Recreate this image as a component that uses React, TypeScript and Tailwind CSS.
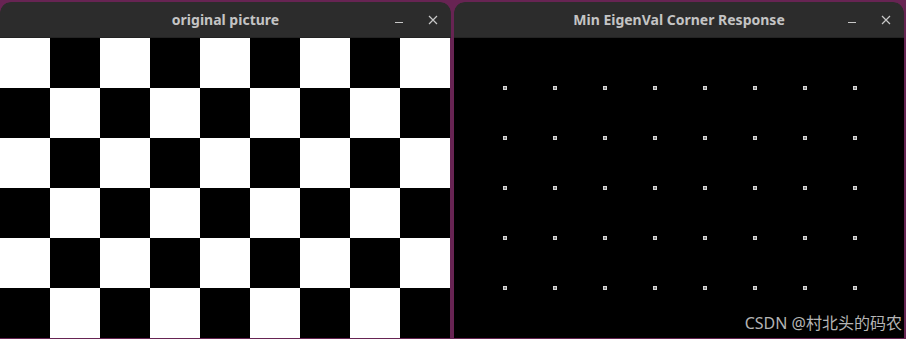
import React from "react";

const rows = [0, 1, 2, 3, 4, 5];
const cols = [0, 1, 2, 3, 4, 5, 6, 7, 8];

function TitleBar({ title }: { title: string }) {
  return (
    <div className="relative flex h-[36px] items-center justify-center rounded-t-[11px] bg-[#2c2c2c] border-b border-[#232323]">
      <span
        className="text-[14px] font-bold text-[#c4c4c4]"
        style={{ fontFamily: '"Noto Sans", "DejaVu Sans", sans-serif' }}
      >
        {title}
      </span>
      <div className="absolute right-[13px] top-0 flex h-full items-center gap-[25px]">
        <div className="h-[1px] w-[8px] translate-y-[3px] bg-[#c8c8c8]" />
        <svg width="10" height="10" viewBox="0 0 10 10">
          <path d="M1 1 L9 9 M9 1 L1 9" stroke="#c8c8c8" strokeWidth="1.2" />
        </svg>
      </div>
    </div>
  );
}

export default function App() {
  return (
    <div className="relative flex h-[339px] w-[906px] gap-[3px] overflow-hidden bg-[#672453] pt-[2px]">
      <div className="flex w-[451px] flex-col overflow-hidden rounded-t-[11px]">
        <TitleBar title="original picture" />
        <div className="grid grid-cols-[repeat(9,50px)] grid-rows-[repeat(6,50px)]">
          {rows.map((r) =>
            cols.map((c) => (
              <div
                key={`${r}-${c}`}
                className={(r + c) % 2 === 0 ? "bg-white" : "bg-black"}
              />
            ))
          )}
        </div>
      </div>
      <div className="flex w-[450px] flex-col overflow-hidden rounded-t-[11px]">
        <TitleBar title="Min EigenVal Corner Response" />
        <div className="h-[300px] bg-black pl-[49px] pt-[48px]">
          <div className="grid grid-cols-[repeat(8,50px)] grid-rows-[repeat(5,50px)]">
            {[0, 1, 2, 3, 4].map((r) =>
              [0, 1, 2, 3, 4, 5, 6, 7].map((c) => (
                <div key={`${r}-${c}`}>
                  <div className="h-[4px] w-[4px] border border-[#d8d8d8] bg-[#8a8a8a]" />
                </div>
              ))
            )}
          </div>
        </div>
      </div>
      <div
        className="absolute bottom-[4px] right-[4px] text-[16px] text-[#b4b4b4]"
        style={{ fontFamily: '"Noto Sans", "Noto Sans CJK SC", sans-serif' }}
      >
        CSDN @村北头的码农
      </div>
    </div>
  );
}
